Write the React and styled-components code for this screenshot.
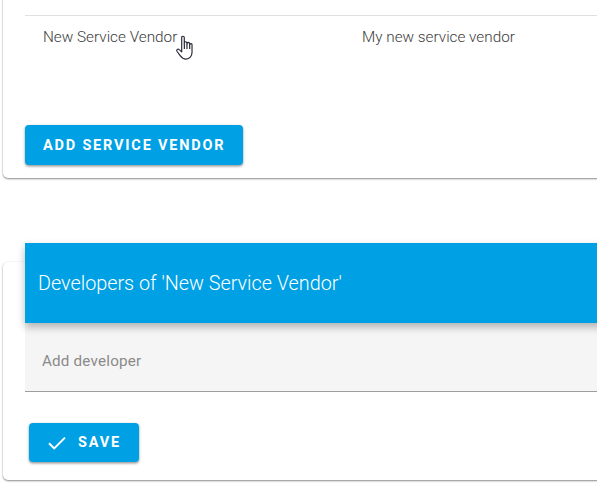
import React from "react";
import styled, { createGlobalStyle } from "styled-components";

const GlobalStyle = createGlobalStyle`
  html, body {
    margin: 0;
    height: 100%;
    overflow: hidden;
    background: #fff;
    font-family: Roboto, "Liberation Sans", sans-serif;
  }
`;

const Page = styled.div`
  width: 700px;
  padding-left: 3px;
  display: flex;
  flex-direction: column;
  gap: 84px;
`;

const Card = styled.section`
  background: #fff;
  border-radius: 5px;
  box-shadow: 0 1px 2px rgba(0, 0, 0, 0.45), 0 0 2px rgba(0, 0, 0, 0.06);
  padding-left: 22px;
`;

const VendorCard = styled(Card)`
  margin-top: -20px;
  padding-top: 35px;
  padding-bottom: 13px;
`;

const DeveloperCard = styled(Card)`
  padding-bottom: 18px;
`;

const Row = styled.div`
  display: grid;
  grid-template-columns: 319px 1fr;
  height: 110px;
  padding: 11px 0 0 18px;
  box-sizing: border-box;
  border-top: 1px solid #e0e0e0;
  font-size: 15.3px;
  font-weight: 300;
  line-height: 20px;
  color: #3c3c3c;
`;

const NameCell = styled.div`
  position: relative;
`;

const Pointer = styled.svg`
  position: absolute;
  left: 132px;
  top: 7px;
  width: 22px;
  height: 28px;
`;

const Button = styled.button`
  display: flex;
  align-items: center;
  gap: ${(p) => (p.$icon ? "12px" : "0")};
  height: ${(p) => p.$height}px;
  padding: 0 18px 0 ${(p) => (p.$icon ? "19px" : "18px")};
  border: 0;
  border-radius: 4px;
  background: #00a1e4;
  color: #fff;
  font-family: inherit;
  font-size: 14.5px;
  font-weight: 700;
  letter-spacing: 1.8px;
  text-transform: uppercase;
  box-shadow: 0 1px 3px rgba(0, 0, 0, 0.35), 0 2px 2px rgba(0, 0, 0, 0.12);
`;

const SaveButton = styled(Button)`
  margin: 31px 0 0 4px;
`;

const Header = styled.header`
  display: flex;
  align-items: center;
  height: 80px;
  margin-top: -19px;
  padding-left: 13px;
  background: #00a1e4;
  color: #fff;
  font-size: 19.8px;
  font-weight: 300;
  box-shadow: 0 4px 8px rgba(0, 0, 0, 0.28);
  position: relative;
`;

const Field = styled.div`
  display: flex;
  align-items: center;
  height: 69px;
  padding: 8px 0 0 17px;
  box-sizing: border-box;
  background: #f5f5f5;
  border-bottom: 1px solid #9e9e9e;
  color: #8a8a8a;
  font-size: 15.2px;
  letter-spacing: 0.2px;
`;

const HandCursor = () => (
  <Pointer viewBox="0 0 20 26" fill="#fff" stroke="#2a2a3a" strokeWidth="1.1" strokeLinejoin="round">
    <path d="M6 3.2c0-1.5 2.4-1.5 2.4 0V10l.1-1.8c.1-1.3 2.2-1.3 2.3 0l.1 1.8.2-1.3c.2-1.2 2.1-1.1 2.2.1l.1 1.5.3-.8c.4-1 1.9-.8 1.9.4V17c0 3.6-2.3 6.3-5.6 6.3-2.7 0-4.1-1.3-5.4-3.2L1.6 16c-.9-1.4.9-2.7 2.1-1.5L6 16.6V3.2z" />
    <path d="M8.5 10v4M10.9 10v4M13.4 10.5V14" fill="none" />
  </Pointer>
);

const CheckIcon = () => (
  <svg width="18" height="14" viewBox="0 0 18 14" fill="none" stroke="#fff" strokeWidth="2">
    <path d="M1 7.2l5.2 5.2L17 1.6" />
  </svg>
);

export default function App() {
  return (
    <>
      <GlobalStyle />
      <Page>
        <VendorCard>
          <Row>
            <NameCell>
              New Service Vendor
              <HandCursor />
            </NameCell>
            <div>My new service vendor</div>
          </Row>
          <Button $height={40}>Add service vendor</Button>
        </VendorCard>
        <DeveloperCard>
          <Header>Developers of 'New Service Vendor'</Header>
          <Field>Add developer</Field>
          <SaveButton $height={39} $icon>
            <CheckIcon />
            Save
          </SaveButton>
        </DeveloperCard>
      </Page>
    </>
  );
}
